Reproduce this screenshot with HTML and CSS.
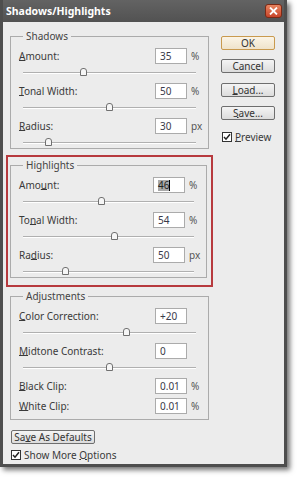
FILE: index.html
```html
<html>
<head>
<title>Shadows/Highlights</title>
<link rel="stylesheet" href="styles.css">
</head>
<body>

<div class="window">
  <div class="titlebar">
    <span class="title">Shadows/Highlights</span>
    <span class="close">
      <svg width="9" height="8" viewBox="0 0 9 8"><path d="M1 0.5 L8 7.5 M8 0.5 L1 7.5" stroke="#fff" stroke-width="1.8"/></svg>
    </span>
  </div>

  <div class="client">
    <div class="main">
      <div class="left">

        <fieldset class="group">
          <legend>Shadows</legend>
          <div class="param">
            <div class="param-row"><label><u>A</u>mount:</label><span class="field">35</span><span class="unit">%</span></div>
            <div class="slider"><span class="thumb" style="left:35%"></span></div>
          </div>
          <div class="param">
            <div class="param-row"><label><u>T</u>onal Width:</label><span class="field">50</span><span class="unit">%</span></div>
            <div class="slider"><span class="thumb" style="left:50%"></span></div>
          </div>
          <div class="param">
            <div class="param-row"><label><u>R</u>adius:</label><span class="field">30</span><span class="unit">px</span></div>
            <div class="slider"><span class="thumb" style="left:15%"></span></div>
          </div>
        </fieldset>

        <div class="marked">
          <fieldset class="group">
            <legend>Highlights</legend>
            <div class="param">
              <div class="param-row"><label>Amo<u>u</u>nt:</label><span class="field"><span class="sel">46</span><span class="caret"></span></span><span class="unit">%</span></div>
              <div class="slider"><span class="thumb" style="left:46%"></span></div>
            </div>
            <div class="param">
              <div class="param-row"><label>To<u>n</u>al Width:</label><span class="field">54</span><span class="unit">%</span></div>
              <div class="slider"><span class="thumb" style="left:54%"></span></div>
            </div>
            <div class="param">
              <div class="param-row"><label>Ra<u>d</u>ius:</label><span class="field">50</span><span class="unit">px</span></div>
              <div class="slider"><span class="thumb" style="left:25%"></span></div>
            </div>
          </fieldset>
        </div>

        <fieldset class="group adjust">
          <legend>Adjustments</legend>
          <div class="param">
            <div class="param-row"><label><u>C</u>olor Correction:</label><span class="field">+20</span><span class="unit"></span></div>
            <div class="slider"><span class="thumb" style="left:60%"></span></div>
          </div>
          <div class="param">
            <div class="param-row"><label><u>M</u>idtone Contrast:</label><span class="field">0</span><span class="unit"></span></div>
            <div class="slider"><span class="thumb" style="left:50%"></span></div>
          </div>
          <div class="param clip">
            <div class="param-row"><label><u>B</u>lack Clip:</label><span class="field">0.01</span><span class="unit">%</span></div>
          </div>
          <div class="param">
            <div class="param-row"><label><u>W</u>hite Clip:</label><span class="field">0.01</span><span class="unit">%</span></div>
          </div>
        </fieldset>

      </div>

      <div class="right">
        <button class="btn default">OK</button>
        <button class="btn cancel">Cancel</button>
        <button class="btn load"><u>L</u>oad...</button>
        <button class="btn save"><u>S</u>ave...</button>
        <div class="check preview"><span class="box"><svg width="8" height="8" viewBox="0 0 8 8"><path d="M1 4 L3 6.2 L7 1.2" fill="none" stroke="#222" stroke-width="1.5"/></svg></span><span><u>P</u>review</span></div>
      </div>
    </div>

    <div class="footer">
      <button class="btn defaults">Sa<u>v</u>e As Defaults</button>
      <div class="check more"><span class="box"><svg width="8" height="8" viewBox="0 0 8 8"><path d="M1 4 L3 6.2 L7 1.2" fill="none" stroke="#222" stroke-width="1.5"/></svg></span><span>Show More <u>O</u>ptions</span></div>
    </div>
  </div>
</div>

</body>
</html>
```

FILE: styles.css
```css
body { margin:0; background:#fff; font-family:"Noto Sans", "Liberation Sans", sans-serif; font-size:10px; color:#3a3a3a; }
u { text-decoration:underline; text-underline-offset:0; }

.window { width:287px; height:467px; box-sizing:border-box; padding:0 3px 3px; background:#4e4e4e; box-shadow:3px 3px 5px rgba(0,0,0,.55); display:flex; flex-direction:column; }
.titlebar { height:22px; flex:none; display:flex; align-items:center; justify-content:space-between; padding:0 2px 0 3px; background:linear-gradient(#636363, #525252); color:#fff; }
.title { font-weight:bold; font-size:10.5px; }
.close { width:17px; height:14px; box-sizing:border-box; border:1px solid #7c2a16; border-radius:3px; background:linear-gradient(#e88560, #c8452a); display:flex; align-items:center; justify-content:center; }

.client { flex:1; background:#ececec; padding:7px 3px 0; display:flex; flex-direction:column; }
.main { display:flex; gap:8px; }
.left { width:207px; flex:none; }
.right { width:54px; flex:none; padding-top:7px; display:flex; flex-direction:column; }

.group { margin:0 4px 0 4px; padding:5px 3px 0 8px; border:1px solid #ababab; min-width:0; }
.group legend { margin-left:4px; padding:0 3px; line-height:14px; color:#444; }
.adjust { margin-top:2px; padding-bottom:5px; }

.marked { margin-top:6px; border:2px solid #b73a3e; padding:1px 1px 7px 0; }
.marked .group { margin:0 3px 0 2px; }

.param { margin-bottom:5px; }
.param:last-child { margin-bottom:0; }
.param.clip { margin-bottom:4px; }
.param-row { display:flex; align-items:center; height:16px; }
.param-row label { flex:1; }
.field { width:32px; height:16px; box-sizing:border-box; border:1px solid #ababab; background:#fff; padding:0 0 0 4px; line-height:14px; color:#3a3a4a; display:flex; align-items:center; }
.unit { width:14px; margin-left:4px; color:#555; }
.sel { background:#a9a9a9; color:#222; line-height:11px; }
.caret { width:1px; height:11px; background:#000; }

.slider { position:relative; height:14px; margin:0 9px 0 4px; }
.slider::before { content:""; position:absolute; left:0; right:0; top:8px; border-top:1px solid #b0b0b0; border-bottom:1px solid #fff; }
.thumb { position:absolute; top:4px; width:7px; height:8px; margin-left:-4px; }
.thumb::before { content:""; position:absolute; left:0; top:0; width:5px; height:6px; border:1px solid #707070; border-radius:3px 3px 0 0; background:#f6f6f6; }

.btn { height:14px; box-sizing:border-box; padding:0; border:1px solid #6e6e6e; border-radius:2px; background:linear-gradient(#f4f4f4, #dcdcdc); font-family:"Noto Sans", "Liberation Sans", sans-serif; font-size:10px; line-height:11px; color:#333; }
.btn.default { border-color:#c99a4e; background:linear-gradient(#fbf4e6, #efe3cb); }
.btn.cancel { margin-top:9px; }
.btn.load { margin-top:10px; }
.btn.save { margin-top:9px; }

.check { display:flex; align-items:center; gap:3px; height:11px; }
.check .box { width:10px; height:10px; box-sizing:border-box; border:1px solid #333; background:#fff; display:flex; align-items:center; justify-content:center; }
.preview { margin-top:11px; padding-left:1px; }

.footer { padding-left:5px; }
.btn.defaults { margin-top:10px; width:84px; }
.more { margin-top:5px; }
```
